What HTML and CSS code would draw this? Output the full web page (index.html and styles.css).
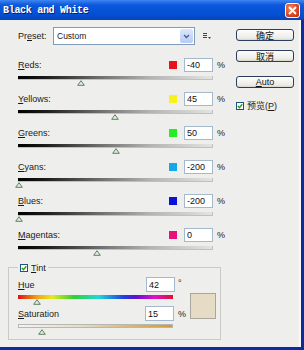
FILE: index.html
```html
<!DOCTYPE html>
<html lang="zh-cn">
<head>
  <meta charset="UTF-8">
  <title>Black and White</title>
  <link rel="stylesheet" href="styles.css">
</head>
<body>
  <div class="window">
    <div class="titlebar">
      <span class="title">Black and White</span>
      <span class="close">
        <svg width="9" height="9" viewBox="0 0 9 9"><path d="M1 1 L8 8 M8 1 L1 8" stroke="#fff" stroke-width="1.8"/></svg>
      </span>
    </div>

    <div class="client">
      <div class="main">
        <div class="preset">
          <label class="preset-label">Pr<u>e</u>set:</label>
          <div class="select">
            <span class="select-text">Custom</span>
            <span class="drop">
              <svg width="7" height="5" viewBox="0 0 7 5"><path d="M1 1 L3.5 3.5 L6 1" fill="none" stroke="#4d6185" stroke-width="1.4"/></svg>
            </span>
          </div>
          <svg class="menu-icon" width="8" height="8" viewBox="0 0 8 8">
            <path d="M0 1.5 H4 M0 3.5 H4 M0 5.5 H4" stroke="#444" stroke-width="1"/>
            <path d="M5 5 H8 L6.5 7 Z" fill="#444"/>
          </svg>
        </div>

        <div class="mix">
          <div class="row">
            <div class="row-top">
              <span class="name"><u>R</u>eds:</span>
              <span class="swatch" style="background:#e8121b"></span>
              <input class="num" type="text" value="-40">
              <span class="unit">%</span>
            </div>
            <div class="bar"></div>
            <svg class="thumb" style="margin-left:59px" width="8" height="6" viewBox="0 0 8 6"><path d="M4 0.7 L7.3 5.3 H0.7 Z" fill="#e4ece2" stroke="#5f7f62"/></svg>
          </div>
          <div class="row">
            <div class="row-top">
              <span class="name"><u>Y</u>ellows:</span>
              <span class="swatch" style="background:#f6f21a"></span>
              <input class="num" type="text" value="45">
              <span class="unit">%</span>
            </div>
            <div class="bar"></div>
            <svg class="thumb" style="margin-left:93px" width="8" height="6" viewBox="0 0 8 6"><path d="M4 0.7 L7.3 5.3 H0.7 Z" fill="#e4ece2" stroke="#5f7f62"/></svg>
          </div>
          <div class="row">
            <div class="row-top">
              <span class="name"><u>G</u>reens:</span>
              <span class="swatch" style="background:#22ee22"></span>
              <input class="num" type="text" value="50">
              <span class="unit">%</span>
            </div>
            <div class="bar"></div>
            <svg class="thumb" style="margin-left:94px" width="8" height="6" viewBox="0 0 8 6"><path d="M4 0.7 L7.3 5.3 H0.7 Z" fill="#e4ece2" stroke="#5f7f62"/></svg>
          </div>
          <div class="row">
            <div class="row-top">
              <span class="name"><u>C</u>yans:</span>
              <span class="swatch" style="background:#16a8e6"></span>
              <input class="num" type="text" value="-200">
              <span class="unit">%</span>
            </div>
            <div class="bar"></div>
            <svg class="thumb" style="margin-left:-3px" width="8" height="6" viewBox="0 0 8 6"><path d="M4 0.7 L7.3 5.3 H0.7 Z" fill="#e4ece2" stroke="#5f7f62"/></svg>
          </div>
          <div class="row">
            <div class="row-top">
              <span class="name"><u>B</u>lues:</span>
              <span class="swatch" style="background:#0c12d8"></span>
              <input class="num" type="text" value="-200">
              <span class="unit">%</span>
            </div>
            <div class="bar"></div>
            <svg class="thumb" style="margin-left:-3px" width="8" height="6" viewBox="0 0 8 6"><path d="M4 0.7 L7.3 5.3 H0.7 Z" fill="#e4ece2" stroke="#5f7f62"/></svg>
          </div>
          <div class="row">
            <div class="row-top">
              <span class="name"><u>M</u>agentas:</span>
              <span class="swatch" style="background:#e8107a"></span>
              <input class="num" type="text" value="0">
              <span class="unit">%</span>
            </div>
            <div class="bar"></div>
            <svg class="thumb" style="margin-left:75px" width="8" height="6" viewBox="0 0 8 6"><path d="M4 0.7 L7.3 5.3 H0.7 Z" fill="#e4ece2" stroke="#5f7f62"/></svg>
          </div>
        </div>

        <fieldset class="tint">
          <legend class="tint-legend">
            <span class="check">
              <svg width="6" height="6" viewBox="0 0 6 6"><path d="M0.8 3 L2.4 4.6 L5.3 1.2" fill="none" stroke="#21a121" stroke-width="1.4"/></svg>
            </span>
            <span><u>T</u>int</span>
          </legend>
          <div class="tint-body">
            <div class="tint-sliders">
              <div class="tint-line">
                <span class="name"><u>H</u>ue</span>
                <input class="num" type="text" value="42">
                <span class="unit deg">°</span>
              </div>
              <div class="bar hue-bar"></div>
              <svg class="thumb" style="margin-left:15px" width="8" height="6" viewBox="0 0 8 6"><path d="M4 0.7 L7.3 5.3 H0.7 Z" fill="#e4ece2" stroke="#5f7f62"/></svg>
              <div class="tint-line sat-line">
                <span class="name"><u>S</u>aturation</span>
                <input class="num" type="text" value="15">
                <span class="unit">%</span>
              </div>
              <div class="bar sat-bar"></div>
              <svg class="thumb thumb-sat" style="margin-left:20px" width="8" height="6" viewBox="0 0 8 6"><path d="M4 0.7 L7.3 5.3 H0.7 Z" fill="#e4ece2" stroke="#5f7f62"/></svg>
            </div>
            <div class="tint-swatch"></div>
          </div>
        </fieldset>
      </div>

      <div class="side">
        <button class="btn">确定</button>
        <button class="btn btn-cancel">取消</button>
        <button class="btn btn-auto"><u>A</u>uto</button>
        <div class="preview">
          <span class="check">
            <svg width="6" height="6" viewBox="0 0 6 6"><path d="M0.8 3 L2.4 4.6 L5.3 1.2" fill="none" stroke="#21a121" stroke-width="1.4"/></svg>
          </span>
          <span>预览(<u>P</u>)</span>
        </div>
      </div>
    </div>
  </div>
</body>
</html>
```

FILE: styles.css
```css
body { margin: 0; font-family: "Liberation Sans", "Noto Sans CJK SC", sans-serif; font-size: 9px; color: #1a1a1a; }
u { text-decoration: underline; text-underline-offset: 1px; }

.window { width: 304px; height: 350px; background: #0b2c9c; display: flex; flex-direction: column; }
.titlebar { height: 20px; flex: none; display: flex; align-items: center; justify-content: space-between; padding: 0 4px 0 3px; background: linear-gradient(#3f86f0, #0a58dc 25%, #0450d4 70%, #0744bc); }
.title { font-family: "Liberation Mono", monospace; font-weight: bold; font-size: 10px; letter-spacing: -0.3px; color: #fff; text-shadow: 1px 1px 0 #0c1d70; }
.close { width: 13px; height: 13px; border: 1px solid #fff; border-radius: 3px; display: flex; align-items: center; justify-content: center; background: radial-gradient(circle at 35% 35%, #f08c6c, #d8441e 60%, #b8300f); }

.client { flex: 1; margin: 0 3px 3px 0; background: #eeeeec; display: flex; box-shadow: inset -2px 0 0 #f8f8f6; }

.main { width: 228px; padding: 7px 0 0 8px; }
.preset { display: flex; align-items: center; margin-left: 10px; height: 18px; }
.preset-label { width: 35px; }
.select { width: 142px; height: 18px; box-sizing: border-box; border: 1px solid #7f9db9; background: #fff; display: flex; align-items: center; justify-content: space-between; }
.select-text { padding-left: 3px; font-size: 8.5px; }
.drop { width: 13px; height: 14px; margin-right: 1px; border-radius: 2px; background: linear-gradient(#dde7fd, #b8cbf7); display: flex; align-items: center; justify-content: center; }
.menu-icon { margin-left: 8px; }

.mix { margin: 12px 0 0 10px; }
.row { height: 34px; width: 207px; }
.row-top { height: 15px; display: flex; align-items: center; }
.name { flex: 1; }
.swatch { width: 8px; height: 8px; margin-right: 7px; }
.num { width: 29px; height: 14px; box-sizing: border-box; border: 1px solid #a5b9cc; background: #fff; font: 9px "Liberation Sans", sans-serif; padding: 0 0 0 2px; margin: 0; color: #111; }
.unit { width: 8px; margin-left: 4px; }
.bar { width: 195px; height: 4px; margin-top: 4px; box-sizing: border-box; background: linear-gradient(to right, #000 0%, #1c1c1c 14%, #6e6e6e 42%, #b4b4b4 68%, #e4e4e4 100%); box-shadow: inset -1px -1px 0 #c0c0c0; }
.thumb { display: block; }

.tint { margin: 1px 0 0; width: 213px; box-sizing: border-box; border: 1px solid #cbcbc6; padding: 0 4px 4px 9px; }
.tint-legend { padding: 0 2px; display: flex; align-items: center; gap: 3px; height: 11px; }
.check { width: 8px; height: 8px; box-sizing: border-box; border: 1px solid #1d5281; background: #fff; display: inline-flex; align-items: center; justify-content: center; }
.tint-body { display: flex; }
.tint-sliders { width: 168px; padding-top: 4px; }
.tint-line { height: 15px; display: flex; align-items: center; }
.tint-line .num { height: 15px; }
.deg { margin-left: 3px; align-self: flex-start; margin-top: 1px; }
.sat-line { margin-top: 1px; }
.hue-bar { width: 155px; margin-top: 3px; box-shadow: none; background: linear-gradient(to right, #e01010, #f0a010 12%, #e8e820 22%, #30d030 36%, #20d8d8 52%, #2040e0 68%, #6010d0 76%, #e010d0 88%, #e01030); }
.sat-bar { width: 155px; margin-top: 3px; border: 1px solid #b8b8b2; background: linear-gradient(to right, #f4f4f2, #e6dccb 40%, #dab370 75%, #d09a38); box-shadow: none; }
.thumb-sat { margin-top: 1px; }
.tint-swatch { width: 26px; height: 26px; box-sizing: border-box; margin: 20px 0 0 4px; border: 1px solid #aaa69c; background: #e6dcc6; }

.side { padding-top: 9px; display: flex; flex-direction: column; }
.btn { width: 58px; height: 12px; box-sizing: border-box; padding: 0; border: 1px solid #2b3e5e; border-radius: 3px; background: linear-gradient(#fdfdfd, #ecebe6 80%, #d6d4cc); font: 9px/9px "Noto Sans CJK SC", "Liberation Sans", sans-serif; color: #111; }
.btn-cancel { margin-top: 9px; }
.btn-auto { margin-top: 14px; font-family: "Liberation Sans", sans-serif; }
.preview { margin-top: 11px; display: flex; align-items: center; gap: 3px; font-family: "Liberation Sans", "Noto Sans CJK SC", sans-serif; }
```
